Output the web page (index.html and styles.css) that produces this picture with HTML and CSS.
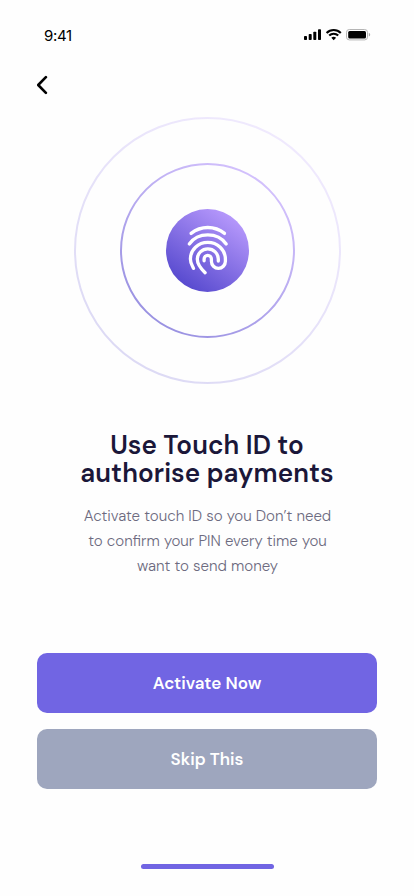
FILE: index.html
```html
<!DOCTYPE html>
<html lang="en">
<head>
<meta charset="utf-8">
<meta name="viewport" content="width=device-width, initial-scale=1">
<title>Touch ID</title>
<link rel="stylesheet" href="styles.css">
</head>
<body>
<main class="screen">
  <header class="status">
    <span class="time">9:41</span>
    <svg class="indicators" width="68" height="14" viewBox="0 0 68 14" aria-hidden="true">
      <rect x="1" y="8" width="3" height="4" rx=".8"/>
      <rect x="5.7" y="6" width="3" height="6" rx=".8"/>
      <rect x="10.3" y="3.7" width="3" height="8.3" rx=".8"/>
      <rect x="15" y="1.3" width="3" height="10.7" rx=".8"/>
      <g fill="none" stroke="#000" stroke-width="2.1">
        <path d="M23.6 4.9a10.1 10.1 0 0 1 14.2 0"/>
        <path d="M26.2 7.6a6.4 6.4 0 0 1 9 0"/>
      </g>
      <path d="M28.3 9.8a3.5 3.5 0 0 1 4.8 0l-2.4 2.5z"/>
      <rect x="43.5" y="1.5" width="21" height="10.4" rx="2.8" fill="none" stroke="#b5b5b5"/>
      <rect x="45.2" y="3.1" width="17.8" height="7.3" rx="1.5"/>
      <path d="M65.8 4.8v3.8a2 2 0 0 0 0-3.8" fill="#aaa"/>
    </svg>
  </header>
  <button class="back" aria-label="Back">
    <svg width="12" height="20" viewBox="0 0 12 20"><path d="M8.9 2.2 1.2 10l7.7 7.8" fill="none" stroke="#000" stroke-width="2.6" stroke-linecap="round" stroke-linejoin="round"/></svg>
  </button>
  <svg class="touch" width="268" height="268" viewBox="0 0 268 268" aria-hidden="true">
    <defs>
      <linearGradient id="violet" x1=".2" y1=".93" x2=".8" y2=".07">
        <stop offset="0" stop-color="#5649ce"/>
        <stop offset="1" stop-color="#b799fc"/>
      </linearGradient>
    </defs>
    <circle cx="134.5" cy="134.5" r="132.5" fill="none" stroke="url(#violet)" stroke-width="2" opacity=".2"/>
    <circle cx="134.5" cy="134.5" r="86.5" fill="none" stroke="url(#violet)" stroke-width="2" opacity=".6"/>
    <circle cx="134.5" cy="134.5" r="41.5" fill="url(#violet)"/>
    <g transform="translate(-.1 -.2)" fill="none" stroke="#fff" stroke-width="3.3" stroke-linecap="round" stroke-linejoin="round">
      <path d="M118.2 117.6Q125.6 111.7 134.9 111.7T151.6 117.6"/>
      <path d="M116.4 128.2C120.3 122.7 127 119.1 134.9 119.1S149.4 122.7 153.3 128.2"/>
      <path d="M120.6 152.6C119.2 149.5 117.5 147.5 117.5 143.3C117.5 133.8 125.3 126.6 134.9 126.6S152.5 134 152.5 143.5V145.5A7 7 0 0 1 138.5 145.5V143.2A3.65 3.65 0 0 0 131.2 143.2V145"/>
      <path d="M132.2 156.9C128 153 124.4 148.8 124.4 143.3A10.5 10.2 0 0 1 145.4 143.3V145.2"/>
    </g>
  </svg>
  <section class="copy">
    <h1>Use Touch ID to<br>authorise payments</h1>
    <p>Activate touch ID so you Don’t need<br>to confirm your PIN every time you<br>want to send money</p>
  </section>
  <div class="actions">
    <button class="button primary">Activate Now</button>
    <button class="button secondary">Skip This</button>
  </div>
  <div class="home"></div>
</main>
</body>
</html>
```
FILE: styles.css
```css
* { box-sizing: border-box; }
body { margin: 0; background: #fefefe; font-family: "DM Sans", Inter, sans-serif; }
button { border: 0; padding: 0; background: none; font-family: inherit; }
svg { display: block; }
.screen {
  display: flex;
  flex-direction: column;
  width: 414px;
  height: 896px;
  padding: 26px 37px 27px;
}
.status {
  display: flex;
  justify-content: space-between;
  height: 20px;
  padding: 2px 6px 0 7px;
}
.time { margin-top: -1px; font-family: Inter, sans-serif; font-size: 15px; line-height: 18px; letter-spacing: -.3px; }
.back { width: 12px; height: 20px; margin-top: 29px; }
.touch { flex: none; align-self: center; margin-top: 21px; }
.copy { margin-top: 47px; text-align: center; white-space: nowrap; }
h1 { margin: 0; color: #1b1739; font-size: 26px; font-weight: 650; line-height: 28px; letter-spacing: .08px; }
p { margin: 17px 0 0; padding-left: 1px; color: #6d6b80; font-size: 15.1px; font-weight: 360; line-height: 25px; }
.actions { display: flex; flex-direction: column; gap: 16px; margin-top: 74px; }
.button { height: 60px; border-radius: 10px; color: #fff; font-size: 17px; font-weight: 600; }
.primary { background: #7165e3; }
.secondary { background: #9ea6be; }
.home { align-self: center; width: 133px; height: 5px; margin-top: auto; border-radius: 3px; background: #7165e3; }
```
